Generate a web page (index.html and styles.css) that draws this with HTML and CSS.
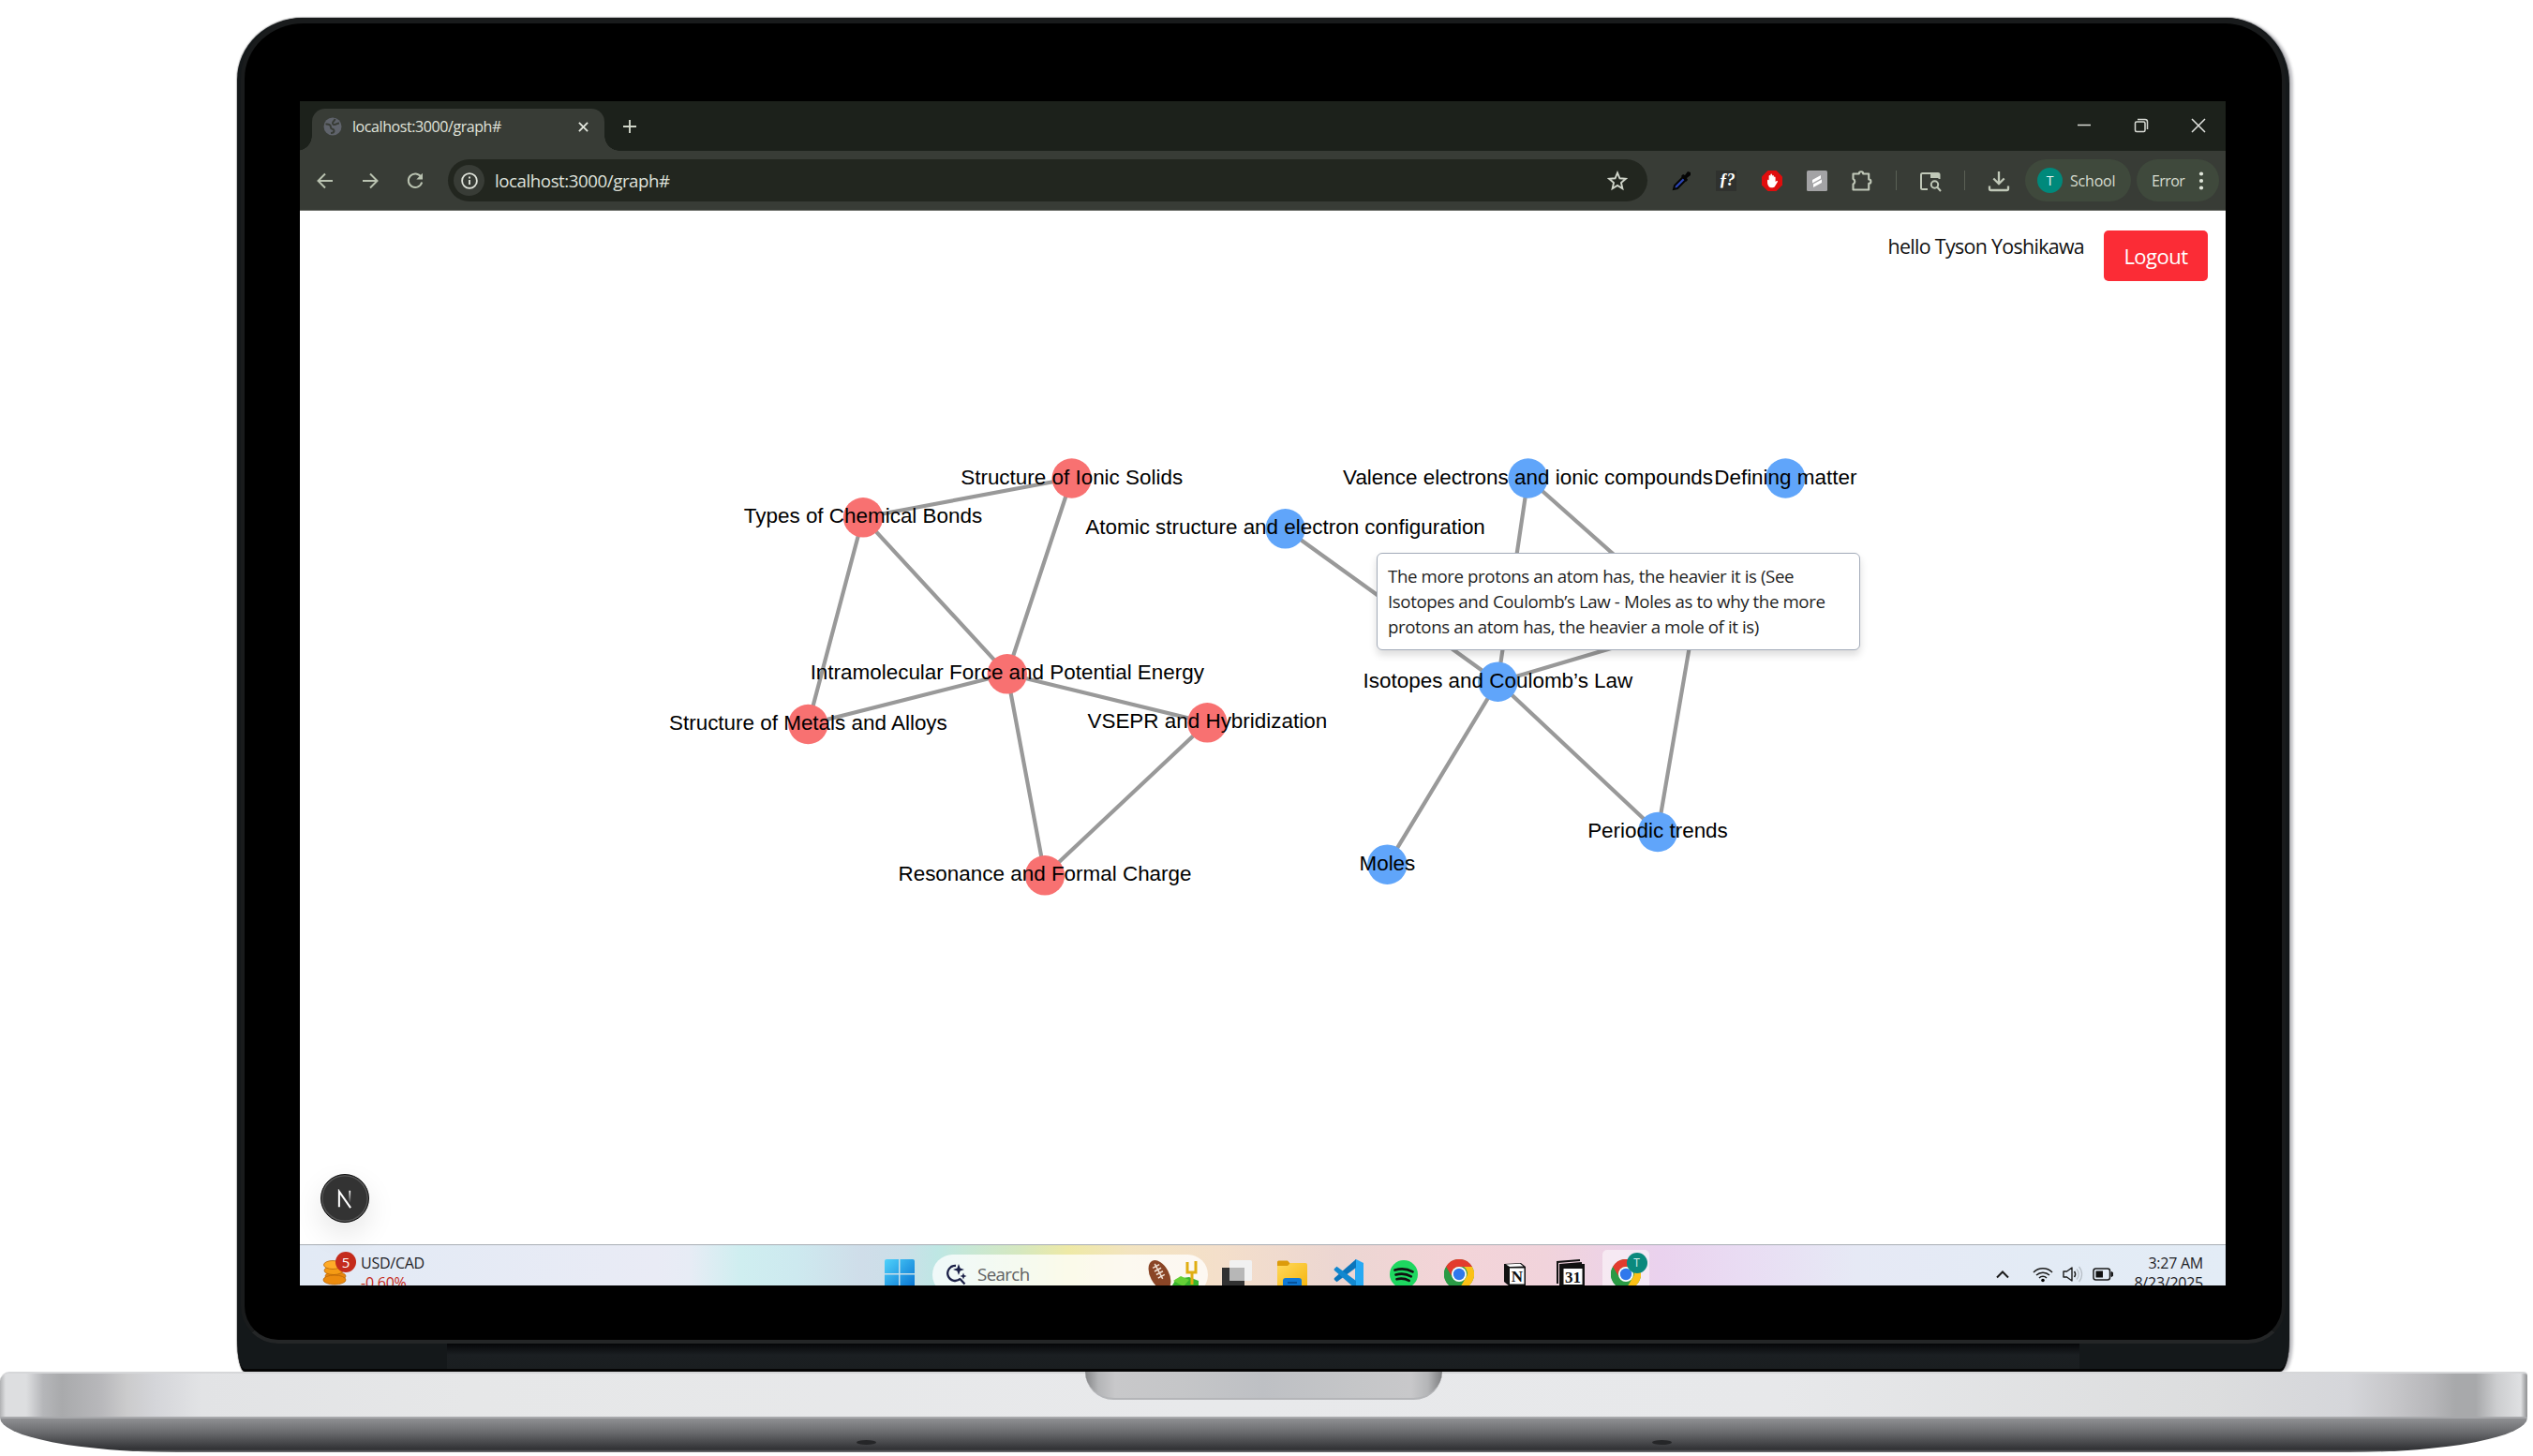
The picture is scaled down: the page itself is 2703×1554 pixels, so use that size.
FILE: index.html
```html
<!DOCTYPE html>
<html lang="en">
<head>
<meta charset="utf-8">
<title>localhost:3000/graph#</title>
<link rel="stylesheet" href="styles.css">
</head>
<body>
<svg width="0" height="0" class="defs" aria-hidden="true">
  <defs>
    <linearGradient id="win" x1="0" y1="0" x2="1" y2="1"><stop offset="0" stop-color="#4fd2fb"/><stop offset="1" stop-color="#0570d0"/></linearGradient>
    <linearGradient id="fold" x1="0" y1="0" x2="1" y2="1"><stop offset="0" stop-color="#ffd95c"/><stop offset="1" stop-color="#f5b50f"/></linearGradient>
    <linearGradient id="nfade" x1="0" y1="0" x2="0" y2="1"><stop offset="0" stop-color="#fff"/><stop offset="1" stop-color="#fff" stop-opacity="0"/></linearGradient>
    <symbol id="chrome" viewBox="0 0 32 32">
      <circle cx="16" cy="16" r="16" fill="#2b9a45"/>
      <path d="M2.1 8A16 16 0 0 1 29.9 8H16a8 8 0 0 0-7 4z" fill="#e33b2e"/>
      <path d="M29.9 8A16 16 0 0 1 16 32l7-12a8 8 0 0 0-2-12z" fill="#fbc116"/>
      <path d="M2.1 8 9 20a8 8 0 0 1 7-12z" fill="#e33b2e"/>
      <path d="M2.1 8 9.1 20l6.9 4L16 32A16 16 0 0 1 2.1 8z" fill="#2b9a45"/>
      <circle cx="16" cy="16" r="8" fill="#fff"/><circle cx="16" cy="16" r="6.2" fill="#2f78ec"/>
    </symbol>
  </defs>
</svg>

<main class="laptop">
  <div class="lid">
    <div class="bezel">
      <div class="screen">

        <div class="tabstrip">
          <div class="tab">
            <svg class="globe" viewBox="0 0 20 20"><circle cx="10" cy="10" r="9.500" fill="#5f636b"/><path d="M2.500 7.500C6 7 8 8.500 8 11s3.500 1 3.500 3.500S9.500 17 8 17M17 6.500c-3 0-3 1.500-5 1.500s-2.500-1.500-1.500-3 1.500-1 2-3" fill="none" stroke="#383c36" stroke-width="2"/></svg>
            <span class="tab-title">localhost:3000/graph#</span>
            <svg class="tab-close" viewBox="0 0 12 12"><path d="M1 1l10 10M11 1L1 11" stroke="#e2e6dd" stroke-width="2" fill="none"/></svg>
          </div>
          <svg class="newtab" viewBox="0 0 14 14"><path d="M7 0v14M0 7h14" stroke="#cfd5c8" stroke-width="1.900"/></svg>
          <div class="window-controls">
            <svg viewBox="0 0 16 16"><path d="M1 7.500h14" stroke="#d8dbd5" stroke-width="1.500"/></svg>
            <svg viewBox="0 0 16 16"><rect x="1.500" y="4" width="10.500" height="10.500" rx="1.500" fill="none" stroke="#d8dbd5" stroke-width="1.500"/><path d="M4 1.500h8a2.500 2.500 0 0 1 2.500 2.500v8" fill="none" stroke="#d8dbd5" stroke-width="1.500"/></svg>
            <svg viewBox="0 0 16 16"><path d="M1 1l14 14M15 1L1 15" stroke="#e2e4e0" stroke-width="1.500"/></svg>
          </div>
        </div>

        <div class="toolbar">
          <div class="nav">
            <svg viewBox="0 0 18 18"><path d="M17 9H2M9 1.500L1.500 9 9 16.500" fill="none" stroke="#b9c2b0" stroke-width="2"/></svg>
            <svg viewBox="0 0 18 18"><path d="M1 9h15M9 1.500L16.500 9 9 16.500" fill="none" stroke="#b9c2b0" stroke-width="2"/></svg>
            <svg viewBox="0 0 18 18"><path d="M15.300 4.800A7.300 7.300 0 1 0 16.200 10.500" fill="none" stroke="#b9c2b0" stroke-width="2"/><path d="M17 .8v6.700h-6.700z" fill="#b9c2b0"/></svg>
          </div>
          <div class="omnibox">
            <span class="site-info"><svg viewBox="0 0 18 18"><circle cx="9" cy="9" r="7.900" fill="none" stroke="#dfe3da" stroke-width="1.800"/><path d="M9 8v5M9 4.600v2" stroke="#dfe3da" stroke-width="1.900"/></svg></span>
            <span class="url">localhost:3000/graph#</span>
            <svg class="star" viewBox="0 0 20 20"><path d="M10 2.200l2.200 5.300 5.800.5-4.400 3.800 1.300 5.700L10 14.500l-4.900 3 1.300-5.700L2 8l5.800-.5z" fill="none" stroke="#d0d5ca" stroke-width="1.700"/></svg>
          </div>
          <div class="extensions">
            <span class="cell"><svg viewBox="0 0 24 24"><path d="M4 21l1-4 9-9 3 3-9 9z" fill="#2c46b8" stroke="#050505" stroke-width="2"/><path d="M12 7l2-2 2 1 3-4 3 1 0 3-4 3 1 2-2 2z" fill="#050505"/></svg></span>
            <span class="cell"><span class="fontq">ƒ?</span></span>
            <span class="cell"><svg viewBox="0 0 24 24"><path d="M7.500 1h9L23 7.500v9L16.500 23h-9L1 16.500v-9z" fill="#e00d0d"/><path d="M7 11.500c0-1 1.500-1 1.600 0V7c0-1.200 1.700-1.200 1.700 0V5.500c0-1.200 1.800-1.200 1.800 0V7c0-1.200 1.800-1.200 1.800 0v1.500c0-1.200 1.700-1.200 1.700 0V13l1-.8c1-.6 1.700.3 1.200 1l-3 5c-1.500 1.500-5 1.500-6.500-.5C7 16 7 14 7 11.500z" fill="#fff"/></svg></span>
            <span class="cell"><svg viewBox="0 0 24 24"><rect x="1" y="1" width="22" height="22" rx="1.500" fill="#a3a3a5"/><path d="M7 11l9-5v3.500l-9 5zM8 15.500l9-5V14l-9 5z" fill="#fff"/></svg></span>
            <span class="cell"><svg viewBox="0 0 24 24"><path d="M2.500 4.500h6.300a2.200 2.200 0 0 1 4.400 0h6v6a2.200 2.200 0 0 1 0 4.400v6.600H2.500v-6a3 3 0 0 0 0-5.500z" fill="none" stroke="#c0c8b8" stroke-width="2.100" stroke-linejoin="round"/></svg></span>
            <i class="divider"></i>
            <span class="cell"><svg viewBox="0 0 24 24"><path d="M9 21H3.500A1.500 1.500 0 0 1 2 19.500v-14A1.500 1.500 0 0 1 3.500 4H20a1.500 1.500 0 0 1 1.500 1.500V10" fill="none" stroke="#c0c8b8" stroke-width="2"/><path d="M12 4h9.500v5H12z" fill="#c0c8b8"/><circle cx="16.500" cy="16" r="3.700" fill="none" stroke="#c0c8b8" stroke-width="2"/><path d="M19 18.500l4 4.500" stroke="#c0c8b8" stroke-width="2"/></svg></span>
            <i class="divider"></i>
            <span class="cell"><svg viewBox="0 0 24 24"><path d="M12 2v13M6.300 9.500L12 15.200l5.700-5.700M2 17.500v3A1.500 1.500 0 0 0 3.500 22h17a1.500 1.500 0 0 0 1.500-1.500v-3" fill="none" stroke="#c0c8b8" stroke-width="2.300"/></svg></span>
          </div>
          <div class="chip profile"><span class="avatar">T</span><span class="school">School</span></div>
          <div class="chip error"><span class="error-text">Error</span><svg viewBox="0 0 6 20"><circle cx="3" cy="2.500" r="2.100"/><circle cx="3" cy="10" r="2.100"/><circle cx="3" cy="17.500" r="2.100"/></svg></div>
        </div>

        <div class="page">
          <header class="userbar">
            <span class="hello">hello Tyson Yoshikawa</span>
            <button class="logout">Logout</button>
          </header>
          <svg class="graph" viewBox="320 225 2055 1103">
            <g class="edges">
              <path d="M921 552.300L1143.700 510.500M921 552.300L1074.800 719.300M921 552.300L862.400 773M1143.700 510.500L1074.800 719.300M862.400 773L1074.800 719.300M1288.300 771.300L1074.800 719.300M1115 934.300L1074.800 719.300M1115 934.300L1288.300 771.300"/>
              <path d="M1371.600 564.300L1598.400 727.700M1630.600 510.500L1598.400 727.700M1630.600 510.500L1805.500 666M1598.400 727.700L1807 666M1598.400 727.700L1480.400 922.700M1598.400 727.700L1769 888M1807 666L1769 888"/>
            </g>
            <g class="red">
              <circle cx="1143.700" cy="510.500" r="21.200"/><circle cx="921" cy="552.300" r="21.200"/><circle cx="1074.800" cy="719.300" r="21.200"/><circle cx="862.400" cy="773" r="21.200"/><circle cx="1288.300" cy="771.300" r="21.200"/><circle cx="1115" cy="934.300" r="21.200"/>
            </g>
            <g class="blue">
              <circle cx="1371.600" cy="564.300" r="21.200"/><circle cx="1630.600" cy="510.500" r="21.200"/><circle cx="1905.300" cy="510.500" r="21.200"/><circle cx="1598.400" cy="727.700" r="21.200"/><circle cx="1480.400" cy="922.700" r="21.200"/><circle cx="1769" cy="888" r="21.200"/>
            </g>
            <g class="labels">
              <text x="1143.700" y="516.500">Structure of Ionic Solids</text>
              <text x="921" y="558.300">Types of Chemical Bonds</text>
              <text x="1074.800" y="725.300">Intramolecular Force and Potential Energy</text>
              <text x="862.400" y="779">Structure of Metals and Alloys</text>
              <text x="1288.300" y="777.300">VSEPR and Hybridization</text>
              <text x="1115" y="940.300">Resonance and Formal Charge</text>
              <text x="1371.600" y="570.300">Atomic structure and electron configuration</text>
              <text x="1630.600" y="516.500">Valence electrons and ionic compounds</text>
              <text x="1905.300" y="516.500">Defining matter</text>
              <text x="1598.400" y="733.700">Isotopes and Coulomb’s Law</text>
              <text x="1480.400" y="928.700">Moles</text>
              <text x="1769" y="894">Periodic trends</text>
            </g>
          </svg>
          <div class="tooltip">The more protons an atom has, the heavier it is (See<br>Isotopes and Coulomb’s Law - Moles as to why the more<br>protons an atom has, the heavier a mole of it is)</div>
          <div class="devtools"><svg viewBox="0 0 20 24"><path d="M3 22V3L17 23" fill="none" stroke="#fff" stroke-width="2.300"/><path d="M15 2h2v15h-2z" fill="url(#nfade)"/></svg></div>
        </div>

        <div class="taskbar">
          <div class="widget">
            <div class="coins">
              <svg viewBox="0 0 30 38"><g stroke="#b96607" stroke-width=".8"><ellipse cx="14" cy="20" rx="11" ry="4.500" fill="#e8870c"/><ellipse cx="12" cy="14" rx="10" ry="4.500" fill="#f59b14"/><ellipse cx="11" cy="8" rx="9.500" ry="4.500" fill="#ffab28"/><ellipse cx="13" cy="24" rx="12" ry="5" fill="#ec8b0d"/></g><path d="M9.500 31l5 5 5-5" fill="none" stroke="#b83a17" stroke-width="3.600"/></svg>
              <span class="badge">5</span>
            </div>
            <div class="rate"><span>USD/CAD</span><span class="down">-0.60%</span></div>
          </div>
          <svg class="start" viewBox="0 0 32 32"><path d="M0 2a2 2 0 0 1 2-2h13v15H0zM16.500 0H30a2 2 0 0 1 2 2v13H16.500zM0 16.500h15V32H0zM16.500 16.500H32V32H16.500z" fill="url(#win)"/></svg>
          <div class="search">
            <svg class="glass" viewBox="0 0 24 24"><path d="M12 3a8 8 0 1 0 5 13.500M16.500 17l5 5.500" fill="none" stroke="#1b2047" stroke-width="2.300"/><path d="M15 1l1.600 4.400L21 7l-4.400 1.600L15 13l-1.600-4.400L9 7l4.400-1.600zM20 10.500l1 2.500 2.500 1-2.500 1-1 2.500-1-2.500-2.500-1 2.500-1z" fill="#1b2047"/></svg>
            <span class="placeholder">Search</span>
            <svg class="doodle" viewBox="0 0 56 34"><path d="M31 22l14-2 10 4v10H24z" fill="#39b52d"/><path d="M28 24l8-5 9 4-6 7z" fill="#65d036"/><path d="M43 4v11h9V3M48 15v13" fill="none" stroke="#e0ae12" stroke-width="3"/><g transform="rotate(-28 13 17)"><ellipse cx="13" cy="18" rx="10" ry="17" fill="#8a4526"/><path d="M14 5v18M10 8h8M10 12h8M10 16h8M10 20h8" stroke="#f0e0d4" stroke-width="1.500"/></g></svg>
          </div>
          <div class="apps">
            <span class="app"><svg viewBox="0 0 32 32"><rect y="9" width="24" height="23" fill="#313131"/><rect x="8" y="1" width="24" height="22" rx="1.500" fill="#f1f1f1"/><path d="M8 9h16v14H9.500A1.500 1.500 0 0 1 8 21.500z" fill="#b7b7b7"/></svg></span>
            <span class="app"><svg viewBox="0 0 32 32"><path d="M0 3a1.500 1.500 0 0 1 1.500-1.500H11L14 5v5H0z" fill="#dc9b0b"/><path d="M0 7h11l3-3h16a2 2 0 0 1 2 2v24H0z" fill="url(#fold)"/><rect x="6" y="20" width="20" height="12" rx="3" fill="#0f78d4"/><path d="M11 25h10" stroke="#07529a" stroke-width="2"/></svg></span>
            <span class="app"><svg viewBox="0 0 32 32"><path d="M24 0l8 4v24l-8 4-1-1V1z" fill="#27a9f3"/><path d="M24 0L1 20a1.500 1.500 0 0 0 0 2l2.500 2.200L24 9z" fill="#0b75bb"/><path d="M3.500 7.800L1 10a1.500 1.500 0 0 0 0 2l23 20v-9z" fill="#1288d0"/></svg></span>
            <span class="app"><svg viewBox="0 0 32 32"><circle cx="16" cy="16" r="15" fill="#1ed760"/><path d="M6.500 11.500c6-1.800 13.500-1.300 19 1.900M7.500 16.500c5.500-1.500 11.500-1 16.300 1.800M8.500 21.300c4.500-1.100 9-.7 13.200 1.600" fill="none" stroke="#101010" stroke-width="2.700" stroke-linecap="round"/></svg></span>
            <span class="app"><svg viewBox="0 0 32 32"><use href="#chrome"/></svg></span>
            <span class="app"><svg viewBox="0 0 32 32"><path d="M4 5l18-1 5 4v21H10l-6-5z" fill="#111"/><path d="M6 5.500l15-.8 3.500 2.800L10 8z" fill="#fff"/><rect x="10" y="9.500" width="15.500" height="17" fill="#fff"/><text x="17.800" y="24" class="notion">N</text></svg></span>
            <span class="app"><svg viewBox="0 0 32 32"><path d="M2 26V3l24-2M5 28V6l23-2" fill="none" stroke="#111" stroke-width="2"/><rect x="6" y="5" width="25" height="24" fill="#111"/><rect x="8.500" y="10" width="20" height="17" fill="#fff"/><text x="18.500" y="24.500" class="cal">31</text></svg></span>
            <span class="app active"><svg viewBox="0 0 32 32"><use href="#chrome"/></svg><span class="app-badge">T</span></span>
          </div>
          <div class="tray">
            <svg class="chev" viewBox="0 0 14 22"><path d="M1 14.500l6-6 6 6" fill="none" stroke="#1b1b1b" stroke-width="2"/></svg>
            <svg class="wifi" viewBox="0 0 22 22"><g fill="none" stroke="#1b1b1b" stroke-width="1.500"><path d="M1 9a14 14 0 0 1 20 0M4 12a10 10 0 0 1 14 0M7 15a5.600 5.600 0 0 1 8 0"/></g><circle cx="11" cy="17.500" r="1.800"/></svg>
            <svg class="sound" viewBox="0 0 22 22"><path d="M1 8h3.500L10 4v14l-5.500-4H1z" fill="none" stroke="#1b1b1b" stroke-width="1.400" stroke-linejoin="round"/><path d="M12.500 8a5 5 0 0 1 0 6" fill="none" stroke="#1b1b1b" stroke-width="1.500"/><path d="M15 5.500a8 8 0 0 1 0 11M17.500 3a12 12 0 0 1 0 16" fill="none" stroke="#b9c0c8" stroke-width="1.300"/></svg>
            <svg class="battery" viewBox="0 0 22 22"><rect x="1" y="5" width="17.500" height="12" rx="2.500" fill="none" stroke="#1b1b1b" stroke-width="1.500"/><rect x="3.500" y="7.500" width="7.500" height="7" fill="#111"/><path d="M20 8.500l1.800 1v3L20 13.500z" fill="#111" stroke="#111"/></svg>
            <div class="clock"><span>3:27 AM</span><span>8/23/2025</span></div>
          </div>
        </div>

      </div>
    </div>
    <div class="hinge"></div>
  </div>
  <div class="deck"><div class="notch"></div></div>
  <div class="underside"><i class="foot"></i><i class="foot"></i></div>
</main>
</body>
</html>
```
FILE: styles.css
```css
* { box-sizing: border-box; }
body { margin: 0; background: #fff; font-family: "Open Sans", "Noto Sans", sans-serif; color: #111; overflow: hidden; }
svg { display: block; flex: none; }
.defs { position: absolute; }

/* laptop body */
.laptop { display: flex; flex-direction: column; width: 2703px; height: 1554px; padding-top: 19px; }
.lid { width: 2190px; height: 1445px; margin-left: 253px; padding: 0 4px; display: flex; flex-direction: column;
  background: #14181a; border-radius: 70px 68px 10px 8px / 66px 70px 34px 34px; border-bottom: 3px solid #050505;
  box-shadow: 5px 0 3px -1px rgba(20, 20, 35, .25), 0 0 1px 1px rgba(0, 0, 0, .25); }
.bezel { height: 1415px; padding: 83px 59px 0 59px; background: #000; border: 4px solid #1e2021; border-top-width: 6px; border-color: #191b1c #191b1c #242627;
  border-radius: 67px 65px 40px 40px / 65px 67px 40px 40px; }
.hinge { flex: 1; margin: 0 220px; background: linear-gradient(#050608, #1b1f22 45%, #1a1e20); }
.deck { width: 2697px; height: 48px; display: flex; justify-content: center; border-top: 2px solid #d6d7d9;
  border-radius: 10px 4px 0 0; 
  background: linear-gradient(90deg, #b0b1b3 0, #dddee0 6px, #dddee0 28px, #b5b6b9 46px, #a9aaac 66px, #b8b8bb 108px, #cbcbcc 135px, #d4d5d9 165px, #e2e3e5 215px, #e6e7e8 500px, #e8e9eb 1300px, #e7e8ea 1900px, #dcddde 2360px, #d5d6da 2505px, #c8c8cb 2550px, #b7b7ba 2595px, #a8a9ab 2620px, #a8a9ab 2642px, #cccdcf 2664px, #dfe0e2 2690px, #97989a 2696px); }
.notch { width: 381px; height: 30px; margin-top: -2px; border-radius: 0 0 30px 30px; border-bottom: 2px solid #b4b5b8;
  background: linear-gradient(90deg, #858688, #b4b5b7 14px, #c8c8ca 32px, #c5c6c8 100px, #bec0c4 190px, #c5c6c8 290px, #c8c8ca 348px, #b4b5b7 366px, #7d7e80); }
.underside { width: 2697px; height: 38px; display: flex; justify-content: center; align-items: flex-end; gap: 828px; padding-bottom: 8px;
  border-top: 2px solid #a7a8ab; border-radius: 0 0 190px 190px / 0 0 37px 37px; background: linear-gradient(#8f9093, #6b6c6f 40%, #303134 92%, #77787a); }
.foot { width: 21px; height: 5px; border-radius: 50%; background: #252628; }

.screen { display: flex; flex-direction: column; width: 2055px; height: 1264px; overflow: hidden; background: #fff; }

/* browser chrome */
.tabstrip { height: 53px; flex: none; display: flex; background: #1c211b; padding: 8px 0 0 13px; }
.tab { position: relative; width: 312px; height: 45px; display: flex; align-items: center; padding: 0 17px 7px 12px; background: #383c36; border-radius: 14px 14px 0 0; }
.tab::before, .tab::after { content: ""; position: absolute; bottom: 0; width: 16px; height: 16px; }
.tab::before { left: -16px; background: radial-gradient(circle at 0 0, transparent 15.5px, #383c36 16px); }
.tab::after { right: -16px; background: radial-gradient(circle at 100% 0, transparent 15.5px, #383c36 16px); }
.globe { width: 20px; height: 20px; margin-right: 11px; }
.tab-title { flex: 1; font-size: 16px; letter-spacing: -.42px; color: #e0e4dc; }
.tab-close { width: 11px; height: 11px; }
.newtab { width: 14px; height: 14px; margin: 12px 0 0 20px; }
.window-controls { display: flex; gap: 45px; margin: 10px 21px 0 auto; }
.window-controls svg { width: 16px; height: 16px; }
.toolbar { height: 64px; flex: none; display: flex; align-items: center; background: #383c36; border-bottom: 1px solid #6d706b; }
.nav { display: flex; gap: 30px; padding: 0 26px 0 18px; flex: none; }
.nav svg { width: 18px; height: 18px; }
.omnibox { width: 1280px; height: 45px; flex: none; display: flex; align-items: center; border-radius: 23px; background: #22261f; padding: 0 21px 0 6px; }
.site-info { width: 33px; height: 33px; border-radius: 50%; background: #383c36; display: grid; place-items: center; margin-right: 11px; }
.site-info svg { width: 18px; height: 18px; }
.url { flex: 1; font-size: 18.700px; letter-spacing: -.44px; color: #dfe2dc; }
.star { width: 22px; height: 22px; }
.extensions { display: flex; align-items: center; padding-left: 12px; width: 403px; flex: none; }
.cell { width: 48.300px; flex: none; display: grid; place-items: center; }
.cell svg { width: 24px; height: 24px; }
.fontq { width: 22px; height: 22px; background: #2f312e; color: #fff; font: italic bold 18px/20px "Liberation Serif", serif; text-align: center; letter-spacing: -1px; }
.divider { width: 1.500px; height: 21px; background: #5a6055; margin: 0 11.500px; flex: none; }
.chip { height: 45px; border-radius: 23px; background: #3f493c; display: flex; align-items: center; color: #d7ddd0; font-size: 16px; flex: none; }
.profile { width: 113px; padding-left: 13px; margin-right: 6px; }
.avatar { width: 27px; height: 27px; border-radius: 50%; background: #00897b; color: #e8f5f3; font-size: 14px; display: grid; place-items: center; margin-right: 8px; }
.school { letter-spacing: -.2px; }
.error { width: 88px; padding-left: 16px; }
.error-text { letter-spacing: -.6px; }
.error svg { width: 6px; height: 20px; margin-left: 15px; fill: #e0e6da; }

/* page */
.page { position: relative; height: 1103px; flex: none; background: #fff; }
.userbar { position: absolute; z-index: 1; top: 0; right: 0; display: flex; align-items: flex-start; gap: 21px; padding: 21px 19px 0 0; }
.hello { font-size: 21.400px; line-height: 34px; letter-spacing: -.68px; }
.logout { width: 111px; height: 54px; border: 0; border-radius: 5px; background: #fb2c36; color: #fff; font: 22px "Open Sans", sans-serif; letter-spacing: -.5px; padding: 0; }
.graph { width: 2055px; height: 1103px; }
.edges { fill: none; stroke: #999; stroke-width: 4.200; }
.red { fill: #f87171; }
.blue { fill: #60a5fa; }
.labels { font: 22.450px "Liberation Sans", Arial, sans-serif; text-anchor: middle; fill: #000; }
.tooltip { position: absolute; left: 1149px; top: 365px; width: 516px; height: 104px; padding: 11px; border: 1.500px solid #a3abb9; border-radius: 6px; background: #fff;
  font-size: 18.700px; line-height: 26.800px; letter-spacing: -.4px; white-space: nowrap; color: #1f1f1f; box-shadow: 0 5px 8px rgba(0, 0, 0, .14); }
.devtools { position: absolute; left: 22px; top: 1028px; width: 52px; height: 52px; border-radius: 50%; background: #333; border: 1.500px solid #111; display: grid; place-items: center;
  box-shadow: inset 0 0 0 1.500px #555, 0 12px 30px rgba(0, 0, 0, .1); }
.devtools svg { width: 18px; height: 21px; }

/* taskbar */
.taskbar { height: 64px; flex: none; display: flex; align-items: center; border-top: 1.500px solid #a9aeb4;
  background: linear-gradient(90deg, #e2eaf5 0, #e9ebf5 380px, #e7ecf5 415px, #cfeef0 470px, #cde9ef 530px, #cfdde9 600px, #cbdfe8 645px, #bee7e4 680px, #d6e8be 770px, #eee9a6 820px, #f3e4c0 885px, #f4dfca 980px, #ecd6d2 1110px, #f3d4d8 1230px, #f1d3db 1330px, #ead2ee 1450px, #e9dcf3 1540px, #e6e9f5 1660px, #e3ebf5 1850px, #e3ecf6 100%); }
.widget { width: 624px; flex: none; display: flex; align-items: center; padding-left: 24px; }
.coins { position: relative; width: 34px; height: 38px; margin-top: 1px; }
.coins svg { width: 30px; height: 38px; }
.badge { position: absolute; left: 14px; top: -6px; width: 22px; height: 22px; border-radius: 50%; background: #c42b1c; color: #fff; font-size: 15px; display: grid; place-items: center; }
.rate, .clock { display: flex; flex-direction: column; font-size: 16px; line-height: 20.500px; letter-spacing: -.25px; color: #1e2226; margin-top: -4px; }
.rate { margin-left: 7px; }
.down { color: #c42b1c; }
.start { width: 32px; height: 32px; }
.search { width: 294px; height: 43px; margin: -1px 1.500px 0 19px; flex: none; display: flex; align-items: center; border-radius: 22px; background: rgba(255, 255, 255, .76); padding: 0 9px 0 13px; }
.glass { width: 24px; height: 24px; }
.placeholder { flex: 1; margin-left: 11px; line-height: 24px; font-size: 18.700px; letter-spacing: -.6px; color: #5f6162; }
.doodle { width: 56px; height: 34px; }
.apps { display: flex; align-items: center; }
.app { position: relative; width: 59.300px; height: 52px; flex: none; display: grid; place-items: center; }
.apps, .start, .chev, .wifi, .sound, .battery { margin-top: -2px; }
.app svg { width: 32px; height: 32px; }
.active::before { content: ""; position: absolute; left: 4px; top: 0; width: 50px; height: 52px; border-radius: 5px; background: rgba(255, 255, 255, .5); }
.active svg { position: relative; }
.app-badge { position: absolute; left: 30px; top: 3px; width: 22px; height: 22px; border-radius: 50%; background: #0b897d; color: #d8f1ee; font-size: 12px; display: grid; place-items: center; }
.notion { font: bold 17px "Liberation Serif", serif; text-anchor: middle; fill: #111; }
.cal { font: bold 17px "Liberation Serif", serif; text-anchor: middle; fill: #111; }
.tray { display: flex; align-items: center; margin-left: auto; padding-right: 24px; }
.chev { width: 14px; height: 22px; margin-right: 25px; }
.wifi, .sound { width: 22px; height: 22px; margin-right: 10px; }
.battery { width: 22px; height: 22px; margin-right: 23px; }
.clock { width: 73px; align-items: flex-end; }
```
